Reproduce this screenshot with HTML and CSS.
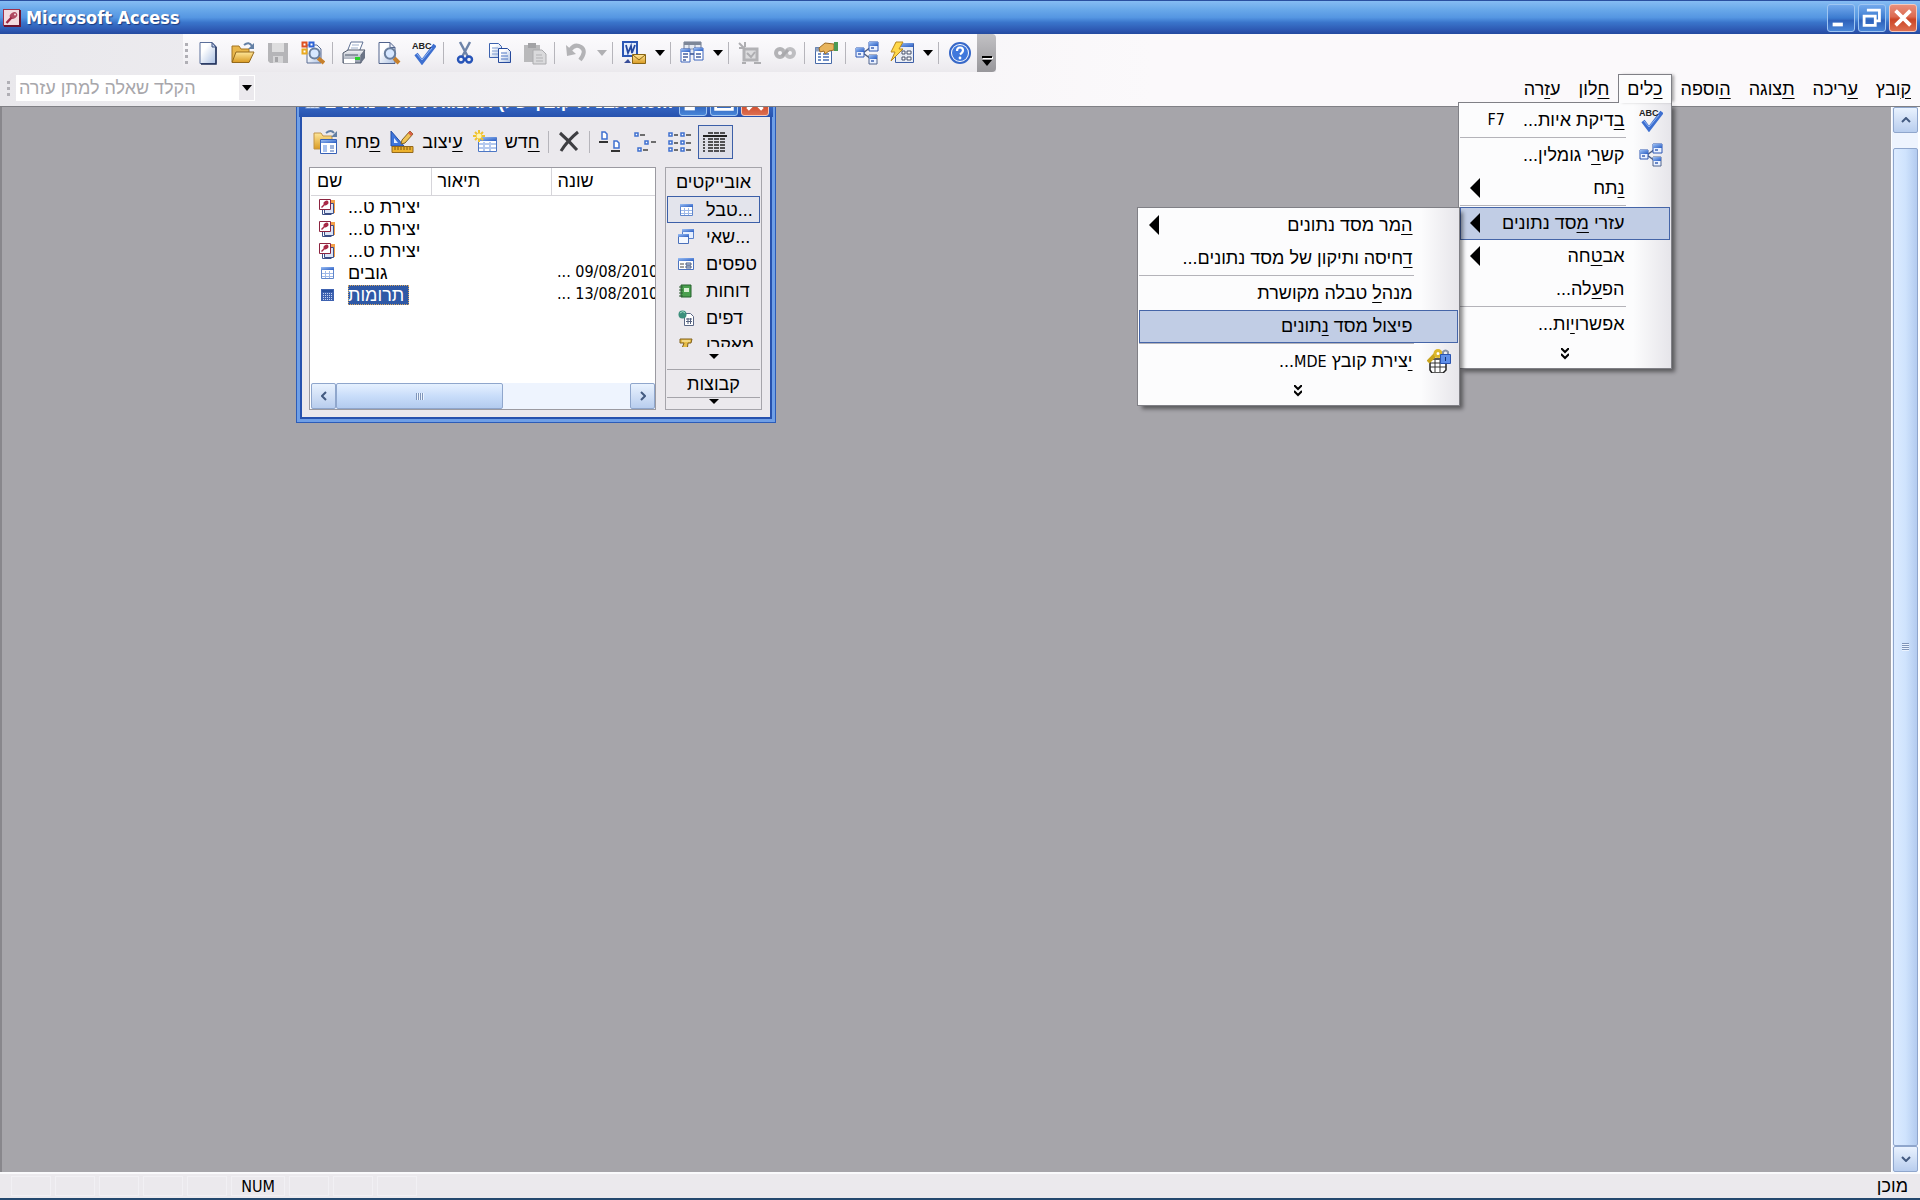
FILE: index.html
```
<!DOCTYPE html>
<html lang="he">
<head>
    <meta charset="UTF-8">
    <meta name="viewport" content="width=device-width, initial-scale=1.0">
    <title>Microsoft Access</title>
    <link rel="stylesheet" href="styles.css">
</head>
<body>
    <!-- Shared icons -->
    <svg class="sprite" width="0" height="0" aria-hidden="true">
        <defs>
            <linearGradient id="gBlue" x1="0" y1="0" x2="1" y2="1"><stop offset="0" stop-color="#9cc0f5"/><stop offset="1" stop-color="#2c5fc4"/></linearGradient>
            <linearGradient id="gPage" x1="0" y1="0" x2="1" y2="1"><stop offset="0.3" stop-color="#ffffff"/><stop offset="1" stop-color="#a9bfe2"/></linearGradient>
            <linearGradient id="gGold" x1="0" y1="0" x2="0" y2="1"><stop offset="0" stop-color="#ffe79a"/><stop offset="1" stop-color="#d99a22"/></linearGradient>
            <linearGradient id="gGray" x1="0" y1="0" x2="0" y2="1"><stop offset="0" stop-color="#f4f5f8"/><stop offset="1" stop-color="#8f98a8"/></linearGradient>
        </defs>
        <symbol id="access" viewBox="0 0 18 18">
            <rect x="0.5" y="0.5" width="16" height="16" fill="#f3dce0" stroke="#a0304a"/>
            <path d="M17 1v16H1" fill="none" stroke="#6d1430" stroke-width="2"/>
            <ellipse cx="10.500" cy="6.500" rx="4" ry="3" transform="rotate(-35 10.500 6.500)" fill="#b04a62"/>
            <path d="M8.500 8.500l-5 5.500" stroke="#9c2744" stroke-width="2.400"/><circle cx="12" cy="5.500" r="1" fill="#f3dce0"/>
        </symbol>
        <symbol id="page" viewBox="0 0 24 24">
            <path d="M4 1.500h12l4 4V22.500H4z" fill="url(#gPage)" stroke="#5b6f9a"/>
            <path d="M20 6v17H5" fill="none" stroke="#1f2f58" stroke-width="1.500"/>
            <path d="M16 1.500V6h4z" fill="#c4d3ee" stroke="#3c507f"/>
        </symbol>
        <symbol id="open" viewBox="0 0 24 24">
            <path d="M1 21V5h7l2 3h8v4" fill="#e9b74c" stroke="#a47420"/>
            <path d="M1 21.500L5 11h18l-5 10.500z" fill="url(#gGold)" stroke="#94691c"/>
            <path d="M13 4q5-4 8 1" fill="none" stroke="#6380a5" stroke-width="2"/>
            <path d="M23 2v6h-6z" fill="#6380a5"/>
        </symbol>
        <symbol id="save" viewBox="0 0 24 24">
            <path d="M2 2h20v20H4l-2-2z" fill="#b5b5b8"/>
            <path d="M6 2h12v9H6z" fill="#dededf"/>
            <path d="M7 15h10v7H7z" fill="#d4d4d6"/><path d="M9 16h3v5H9z" fill="#a5a5a8"/>
        </symbol>
        <symbol id="search" viewBox="0 0 24 24">
            <path d="M6 4h10l4 4v14H6z" fill="url(#gPage)" stroke="#5a6c93"/>
            <path d="M1.500 1.500h4v4h-4z" fill="#fff" stroke="#dd5020" stroke-width="2"/><path d="M8.500 1.500h4v4h-4z" fill="#fff" stroke="#2c63d6" stroke-width="2"/><path d="M1.500 8.500h4v4h-4z" fill="#fff" stroke="#e9aa20" stroke-width="2"/>
            <path d="M17 17l6 5" stroke="#c7802c" stroke-width="4"/>
            <circle cx="13.500" cy="12.500" r="5" fill="#d6e7ff" stroke="#6a7f9e" stroke-width="2"/>
        </symbol>
        <symbol id="print" viewBox="0 0 24 24">
            <path d="M9 1h12l-4 10H5z" fill="#fff" stroke="#5f7194"/><path d="M10 4h7M9 7h7" stroke="#9fb0cc"/>
            <path d="M1 12l5-3h17l-4 5v8H1z" fill="url(#gGray)" stroke="#4c5668"/>
            <path d="M19 14l4-5v8l-4 5z" fill="#6b7486"/>
            <path d="M3 14h13" stroke="#4d586b"/><path d="M2 18h11v4H2z" fill="#fff"/><path d="M13 16h5v3h-5z" fill="#2bd02b"/>
        </symbol>
        <symbol id="preview" viewBox="0 0 24 24">
            <path d="M2 1.500h11l5 5V22.500H2z" fill="url(#gPage)" stroke="#51638c"/><path d="M13 1.500v5h5" fill="none" stroke="#51638c"/>
            <path d="M17 17l5 5" stroke="#c7802c" stroke-width="4"/>
            <circle cx="13" cy="12.500" r="5.200" fill="#d6e7ff" stroke="#6a7f9e" stroke-width="2"/>
        </symbol>
        <symbol id="spell" viewBox="0 0 24 24">
            <path d="M4 13l6 8L23 4" fill="none" stroke="#3d6fd0" stroke-width="4"/>
            <path d="M5 13l5 6L20 7" fill="none" stroke="#8fb4f2"/>
            <text class="abc" x="0" y="8" fill="#222">ABC</text>
        </symbol>
        <symbol id="cut" viewBox="0 0 24 24">
            <path d="M7 1l8 15M17 1L9 16" stroke="#6d83a8" stroke-width="2.500"/>
            <circle cx="8" cy="18.500" r="3" fill="none" stroke="#2754b8" stroke-width="2.400"/><circle cx="16" cy="18.500" r="3" fill="none" stroke="#2754b8" stroke-width="2.400"/>
        </symbol>
        <symbol id="copy" viewBox="0 0 24 24">
            <path d="M1.500 2.500h9l3 3V16.500h-12z" fill="url(#gPage)" stroke="#3d62ae"/><path d="M4 7h6M4 10h7M4 13h6" stroke="#7d9ad0"/>
            <path d="M10.500 7.500h9l3 3V21.500h-12z" fill="url(#gPage)" stroke="#26499c"/><path d="M13 12h6M13 15h7M13 18h7" stroke="#4f76c4"/>
        </symbol>
        <symbol id="paste" viewBox="0 0 24 24">
            <path d="M1 4h16v17H1z" fill="#b9b9bb"/><path d="M5 2h8v5H5z" fill="#a2a2a5"/>
            <path d="M10 9h9l4 4v10H10z" fill="#dadadc" stroke="#ababae"/><path d="M13 14h6M13 17h7M13 20h7" stroke="#b2b2b5"/>
        </symbol>
        <symbol id="undo" viewBox="0 0 24 24">
            <path d="M6 9q5-7 11-3t-1 13" fill="none" stroke="#b3b3b6" stroke-width="4"/><path d="M2 4l1 11 9-2z" fill="#b3b3b6"/>
        </symbol>
        <symbol id="word" viewBox="0 0 24 24">
            <path d="M1 1h14v14H1z" fill="#e4edfc" stroke="#2a56b4" stroke-width="2"/>
            <path d="M4 4l2 8 3-7 1 7 3-8" fill="none" stroke="#2448a0" stroke-width="1.800"/>
            <path d="M10.500 13.500h13v9h-13z" fill="url(#gGold)" stroke="#8a6614"/><path d="M11 14l6 5 6-5" fill="none" stroke="#8a6614"/>
            <path d="M2 22h7l-3-4z" fill="#3a4f9a"/>
        </symbol>
        <symbol id="analyze" viewBox="0 0 24 24">
            <path d="M4 1h17v12H4z" fill="#e6eaf2" stroke="#6c7890"/><path d="M4 1h17v3H4z" fill="#7d8798"/><path d="M5 8h15M9 4v9M15 4v9" stroke="#8a94a8"/>
            <path d="M1 8h9v13H1z" fill="#fff" stroke="#3c64bc"/><path d="M1 8h9v3H1z" fill="url(#gBlue)"/><path d="M14 7h9v12h-9z" fill="#fff" stroke="#3c64bc"/><path d="M14 7h9v3h-9z" fill="url(#gBlue)"/>
            <path d="M3 13h5M3 16h5M3 19h3M16 13h5M16 16h5M10 13h4" fill="none" stroke="#45609e" stroke-width="1.500"/>
        </symbol>
        <symbol id="code" viewBox="0 0 24 24">
            <path d="M6 8h13v11H6z" fill="#dcdcde" stroke="#b2b2b5" stroke-width="3"/><path d="M9 12l4 4 4-5M1 2l6 6M7 1v5M1 7h5" fill="none" stroke="#aeaeb1" stroke-width="2"/><path d="M4 22h4M16 22h7" stroke="#aeaeb1" stroke-width="2"/>
        </symbol>
        <symbol id="script" viewBox="0 0 24 24">
            <circle cx="7" cy="12" r="4" fill="none" stroke="#b3b3b6" stroke-width="4"/><circle cx="17" cy="12" r="4" fill="none" stroke="#bebec1" stroke-width="4"/><path d="M9 15l6-6" stroke="#a9a9ac" stroke-width="3"/>
        </symbol>
        <symbol id="props" viewBox="0 0 24 24">
            <path d="M1.500 6.500h16v16h-16z" fill="#fff" stroke="#476aa8"/><path d="M1.500 6.500h16v4h-16z" fill="#8da0bf"/>
            <path d="M4 13h3M4 16h3M4 19h3M9 13h6M9 16h6M9 19h6" stroke="#4770b8" stroke-width="1.500"/>
            <path d="M5 7l6-5 9 1v6l-5 1-4 3-1-3-4 1z" fill="#e8b45c" stroke="#9a6a24"/><path d="M20 1h4v9h-4z" fill="#4b9a55"/>
        </symbol>
        <symbol id="relations" viewBox="0 0 24 24">
            <path d="M8 12l8-6M8 12l8 6" stroke="#4c5d80" stroke-width="1.500"/>
            <path d="M1 7h8v9H1z" fill="#eaf1ff" stroke="#2d57b2"/><path d="M1 7h8v4H1z" fill="url(#gBlue)"/>
            <path d="M14 1h9v9h-9z" fill="#eaf1ff" stroke="#2d57b2"/><path d="M14 1h9v4h-9z" fill="url(#gBlue)"/>
            <path d="M14 14h8v9h-8z" fill="#eaf1ff" stroke="#51648e"/><path d="M14 14h8v4h-8z" fill="url(#gBlue)"/>
            <path d="M3 13h3M16 7h3M16 20h3" stroke="#3e63b4" stroke-width="1.500"/>
        </symbol>
        <symbol id="newobj" viewBox="0 0 24 24">
            <path d="M5.500 2.500h18v19h-18z" fill="#e9edf5" stroke="#3e5fa6"/><path d="M6 2h17v4H6z" fill="url(#gBlue)"/>
            <path d="M12 10h3v3h-3zM17 10h4v3h-4zM12 16h3v3h-3zM17 16h4v3h-4z" fill="#fff" stroke="#46506a"/>
            <path d="M6 1h7l-4 7h4L1 20l4-9H1z" fill="#ffd84a" stroke="#b8861c"/>
        </symbol>
        <symbol id="help" viewBox="0 0 24 24">
            <circle cx="12" cy="12" r="10" fill="#fff" stroke="#3768c8" stroke-width="2"/><circle cx="12" cy="12" r="8" fill="#3f78dc"/>
            <path d="M9 10q0-3.500 3-3.500t3 3q0 1.500-3 4" fill="none" stroke="#fff" stroke-width="2.200"/><circle cx="12" cy="17" r="1.400" fill="#fff"/>
        </symbol>
        <symbol id="openobj" viewBox="0 0 24 24">
            <path d="M1 19V3h7l2 3h9v13z" fill="url(#gGold)" stroke="#c09348"/>
            <path d="M13 3q5-4 8 0" fill="none" stroke="#6380a5" stroke-width="2"/><path d="M24 1v6h-6z" fill="#6380a5"/>
            <path d="M7.500 9.500h16v14h-16z" fill="#fff" stroke="#3660b6"/><path d="M8 10h15v3H8z" fill="url(#gBlue)"/><path d="M10 15h4v7h-4z" fill="#a9c3ef"/><path d="M17 16h4M17 18h4M17 21h4" stroke="#3e68b8"/>
        </symbol>
        <symbol id="design" viewBox="0 0 24 24">
            <path d="M1 1l13 15H1z" fill="#3e75dc" stroke="#2450a8"/><path d="M4 8l4 5H4z" fill="#e6efff"/>
            <path d="M11 14l1-4 8-9 3 3-8 9z" fill="#f0c355" stroke="#80601f"/><path d="M20 1l3 3-2 2-3-3z" fill="#d8604a"/>
            <path d="M2 16.500h21v6H2z" fill="#edb22d" stroke="#94691c"/><path d="M5 17v3M8 17v3M11 17v3M14 17v3M17 17v3M20 17v3" stroke="#7a5515"/>
        </symbol>
        <symbol id="newtable" viewBox="0 0 24 24">
            <path d="M5.500 7.500h18v14h-18z" fill="#fff" stroke="#4d77c4"/><path d="M6 7h17v4H6z" fill="url(#gBlue)"/><path d="M11 12v9M17 12v9M6 14h17M6 18h17" stroke="#b4c9ee" stroke-width="2"/>
            <path d="M6 0v12M0 6h12M2 2l8 8M10 2l-8 8" stroke="#efc22e" stroke-width="2"/><circle cx="6" cy="6" r="2.500" fill="#fff5b0"/>
        </symbol>
        <symbol id="delete" viewBox="0 0 24 24"><path d="M3 3q8 7 17 17M21 2Q11 10 4 21" fill="none" stroke="#3e3e42" stroke-width="3"/></symbol>
        <symbol id="large" viewBox="0 0 24 24">
            <path d="M4 2h3l2 2v5H4zM16 11h3l2 2v5h-5z" fill="#fff" stroke="#3f70d0" stroke-width="1.500"/><path d="M1 12h9M13 21h9" stroke="#333" stroke-width="2"/>
        </symbol>
        <symbol id="small" viewBox="0 0 24 24">
            <path d="M2 3h3v3H2zM12 11h3v3h-3zM5 18h3v3H5z" fill="#fff" stroke="#3f70d0" stroke-width="1.500"/><path d="M7 5h5M18 12h5M10 20h5" stroke="#444" stroke-width="1.500"/>
        </symbol>
        <symbol id="list" viewBox="0 0 24 24">
            <path d="M1 3h3v3H1zM13 3h3v3h-3zM1 11h3v3H1zM13 11h3v3h-3zM1 18h3v3H1zM13 18h3v3h-3z" fill="#fff" stroke="#3f70d0" stroke-width="1.500"/><path d="M6 5h4M18 5h5M6 13h4M18 13h5M6 20h4M18 20h5" stroke="#444" stroke-width="1.500"/>
        </symbol>
        <symbol id="details" viewBox="0 0 24 24">
            <path d="M5 3h17M5 9h17M5 12h17M5 15h17M5 18h17M5 21h17" stroke="#222" stroke-width="1.500" stroke-dasharray="5 1"/><path d="M0 6h24" stroke="#222" stroke-width="2"/><path d="M1 8v15" stroke="#222" stroke-width="1.500" stroke-dasharray="2 1"/>
        </symbol>
        <symbol id="wizard" viewBox="0 0 16 16">
            <path d="M6 1h10v13H6z" fill="#f3a04a"/><path d="M5.500 4.500h9v10h-9z" fill="#dbe5f8" stroke="#3c4f86"/><path d="M3.500 10v5.500h9" fill="none" stroke="#3c4f86"/><path d="M0.500 0.500h11v10h-11z" fill="#fff" stroke="#8c2440"/>
            <ellipse cx="7" cy="4" rx="2.800" ry="2" transform="rotate(-35 7 4)" fill="#a82846"/><path d="M6 5L2.500 8.500" stroke="#a82846" stroke-width="1.500"/>
        </symbol>
        <symbol id="table" viewBox="0 0 16 16">
            <path d="M2.500 2.500h12v11h-12z" fill="#fff" stroke="#5f86cc"/><path d="M2 2h13v3H2z" fill="url(#gBlue)"/><path d="M6.500 6v7M10.500 6v7M3 8.500h11M3 11.500h11" stroke="#9db8e8"/>
        </symbol>
        <symbol id="tablesel" viewBox="0 0 16 16">
            <path d="M2 2h13v12H2z" fill="#3e62b0"/><path d="M4.500 6v7M6.500 6v7M8.500 6v7M10.500 6v7M12.500 6v7" stroke="#c2d2f2" stroke-dasharray="1 1"/><path d="M3 3h11v2H3z" fill="#274f9e"/>
        </symbol>
        <symbol id="query" viewBox="0 0 16 16">
            <path d="M4.500 0.500h11v9h-11z" fill="#e6efff" stroke="#5b82cc"/><path d="M4 0h12v3H4z" fill="url(#gBlue)"/><path d="M0.500 5.500h10v9H0.500z" fill="#f4f8ff" stroke="#4a70ba"/><path d="M0 5h11v3H0z" fill="url(#gBlue)"/>
        </symbol>
        <symbol id="form" viewBox="0 0 16 16">
            <path d="M0.500 2.500h15v11H0.500z" fill="#fff" stroke="#4c73be"/><path d="M0 2h16v3H0z" fill="url(#gBlue)"/><path d="M2 8h4M2 11h4" stroke="#444"/><path d="M8 7h5v2H8zM8 10h5v2H8z" fill="#cbdcf8" stroke="#4c5c80"/>
        </symbol>
        <symbol id="report" viewBox="0 0 16 16">
            <path d="M3 2h10v12H3z" fill="#4aa04e" stroke="#24602c"/><path d="M6 5h5v4H6z" fill="#d9f0d4"/><path d="M1 4h4M1 7h4M1 10h4M1 13h4" stroke="#2f5d34"/>
        </symbol>
        <symbol id="webpage" viewBox="0 0 16 16">
            <path d="M6.500 3.500h6l3 3v9h-9z" fill="#fff" stroke="#5a6785"/><path d="M8 9h6M8 11.500h6M10 8v6M12.500 8v6" stroke="#54617e"/><circle cx="4.500" cy="4.500" r="4" fill="#3c8f7c"/><path d="M2 3q3-3 5 0" fill="none" stroke="#a3dcc4"/>
        </symbol>
        <symbol id="macro" viewBox="0 0 16 16">
            <path d="M2 2h12l-1 4h-3l-1 8H3l3-8H2z" fill="#e6bd48" stroke="#80601c"/><path d="M4 4h8" stroke="#fff3bd"/>
        </symbol>
        <symbol id="mde" viewBox="0 0 24 24">
            <path d="M3 10h16v11l-3 3H5l-2-3z" fill="#fff" stroke="#222" stroke-width="1.500"/><path d="M3 14h16M3 18h16M8 11v12M13 11v12" stroke="#333"/>
            <path d="M1 13l8-8" stroke="#c9a41c" stroke-width="4"/><circle cx="11" cy="4.500" r="3" fill="#fff" stroke="#dcb72c" stroke-width="3"/>
            <path d="M16 5V3q2.500-3 5 0v2" fill="none" stroke="#8792a6" stroke-width="2"/><path d="M13.500 5.500h10v9h-10z" fill="#5f8fe8" stroke="#2a54b0"/><path d="M18 8h1v4h-1z" fill="#16326e"/>
        </symbol>
        <symbol id="chevrons" viewBox="0 0 8 12"><path d="M0 0l4 4 4-4M0 6l4 4 4-4" fill="none" stroke="#000" stroke-width="2"/></symbol>
        <symbol id="angle" viewBox="0 0 10 6"><path d="M1 5l4-4 4 4" fill="none" stroke="#435a80" stroke-width="2"/></symbol>
    </svg>

    <div class="app">
        <header class="title-bar">
            <svg class="app-icon"><use href="#access"/></svg>
            <h1>Microsoft Access</h1>
            <button class="win-button" aria-label="Minimize"><svg viewBox="0 0 28 28"><path d="M5 19h11v4H5z" fill="#fff"/></svg></button>
            <button class="win-button" aria-label="Restore"><svg viewBox="0 0 28 28"><path d="M10 7V5.500h12V17h-3M5.500 12h12v10h-12z" fill="none" stroke="#fff" stroke-width="3"/></svg></button>
            <button class="win-button close" aria-label="Close"><svg viewBox="0 0 28 28"><path d="M6 6l16 16M22 6L6 22" stroke="#fff" stroke-width="4"/></svg></button>
        </header>

        <div class="bars">
            <div class="toolbar">
                <span class="grip"></span>
                <button class="tool" aria-label="New"><svg><use href="#page"/></svg></button>
                <button class="tool" aria-label="Open"><svg><use href="#open"/></svg></button>
                <button class="tool" aria-label="Save" disabled><svg><use href="#save"/></svg></button>
                <button class="tool" aria-label="File search"><svg><use href="#search"/></svg></button>
                <span class="sep"></span>
                <button class="tool" aria-label="Print"><svg><use href="#print"/></svg></button>
                <button class="tool" aria-label="Print preview"><svg><use href="#preview"/></svg></button>
                <button class="tool" aria-label="Spelling"><svg><use href="#spell"/></svg></button>
                <span class="sep"></span>
                <button class="tool" aria-label="Cut"><svg><use href="#cut"/></svg></button>
                <button class="tool" aria-label="Copy"><svg><use href="#copy"/></svg></button>
                <button class="tool" aria-label="Paste" disabled><svg><use href="#paste"/></svg></button>
                <span class="sep"></span>
                <button class="tool" aria-label="Undo" disabled><svg><use href="#undo"/></svg></button>
                <button class="drop" aria-label="Undo list" disabled></button>
                <span class="sep"></span>
                <button class="tool" aria-label="Office links"><svg><use href="#word"/></svg></button>
                <button class="drop" aria-label="Office links list"></button>
                <span class="sep"></span>
                <button class="tool" aria-label="Analyze"><svg><use href="#analyze"/></svg></button>
                <button class="drop" aria-label="Analyze list"></button>
                <span class="sep"></span>
                <button class="tool" aria-label="Code" disabled><svg><use href="#code"/></svg></button>
                <button class="tool" aria-label="Script editor" disabled><svg><use href="#script"/></svg></button>
                <span class="sep"></span>
                <button class="tool" aria-label="Properties"><svg><use href="#props"/></svg></button>
                <span class="sep"></span>
                <button class="tool" aria-label="Relationships"><svg><use href="#relations"/></svg></button>
                <button class="tool" aria-label="New object"><svg><use href="#newobj"/></svg></button>
                <button class="drop" aria-label="New object list"></button>
                <span class="sep"></span>
                <button class="tool" aria-label="Help"><svg><use href="#help"/></svg></button>
                <button class="more" aria-label="Toolbar options"></button>
            </div>

            <div class="menu-row">
                <span class="grip"></span>
                <div class="ask">
                    <input type="text" aria-label="הקלד שאלה למתן עזרה" placeholder="הקלד שאלה למתן עזרה">
                    <button class="drop" aria-label="Questions"></button>
                </div>
                <nav class="menu-bar" dir="rtl">
                    <button class="menu-title"><u>ק</u>ובץ</button>
                    <button class="menu-title"><u>ע</u>ריכה</button>
                    <button class="menu-title"><u>ת</u>צוגה</button>
                    <button class="menu-title"><u>ה</u>וספה</button>
                    <div class="menu-holder">
                        <button class="menu-title active"><u>כ</u>לים</button>
                        <div class="menu tools-menu">
                            <button class="item"><svg><use href="#spell"/></svg><span><u>ב</u>דיקת איות...</span><kbd>F7</kbd></button>
                            <hr>
                            <button class="item"><svg><use href="#relations"/></svg><span>קש<u>ר</u>י גומלין...</span></button>
                            <button class="item parent"><span><u>נ</u>תח</span></button>
                            <hr>
                            <div class="item-holder">
                                <button class="item parent selected"><span>עזרי <u>מ</u>סד נתונים</span></button>
                                <div class="menu sub-menu">
                                    <button class="item parent"><span><u>ה</u>מר מסד נתונים</span></button>
                                    <button class="item"><span><u>ד</u>חיסה ותיקון של מסד נתונים...</span></button>
                                    <hr>
                                    <button class="item"><span>מנה<u>ל</u> טבלה מקושרת</span></button>
                                    <button class="item selected"><span>פיצול מסד <u>נ</u>תונים</span></button>
                                    <hr>
                                    <button class="item"><svg><use href="#mde"/></svg><span><u>י</u>צירת קובץ <bdi class="latin">MDE</bdi>...</span></button>
                                    <button class="expand" aria-label="Expand"><svg><use href="#chevrons"/></svg></button>
                                </div>
                            </div>
                            <button class="item parent"><span>אב<u>ט</u>חה</span></button>
                            <button class="item"><span>הפ<u>ע</u>לה...</span></button>
                            <hr>
                            <button class="item"><span>אפשרו<u>י</u>ות...</span></button>
                            <button class="expand" aria-label="Expand"><svg><use href="#chevrons"/></svg></button>
                        </div>
                    </div>
                    <button class="menu-title"><u>ח</u>לון</button>
                    <button class="menu-title">ע<u>ז</u>רה</button>
                </nav>
            </div>
        </div>

        <main class="workspace">
            <div class="desktop">
                <section class="db-window">
                    <div class="db-title">
                        <svg class="db-icon"><use href="#table"/></svg>
                        <h2>תרומות : מסד נתונים (תבנית קובץ של Access 2000)</h2>
                        <button class="win-button" aria-label="Minimize window"><svg viewBox="0 0 28 28"><path d="M5 19h11v4H5z" fill="#fff"/></svg></button>
                        <button class="win-button" aria-label="Maximize window"><svg viewBox="0 0 28 28"><path d="M5 6h18v16H5z" fill="none" stroke="#fff" stroke-width="3"/></svg></button>
                        <button class="win-button close" aria-label="Close window"><svg viewBox="0 0 28 28"><path d="M6 6l16 16M22 6L6 22" stroke="#fff" stroke-width="4"/></svg></button>
                    </div>
                    <div class="db-toolbar">
                        <button class="db-tool"><svg><use href="#openobj"/></svg><span><u>פ</u>תח</span></button>
                        <button class="db-tool"><svg><use href="#design"/></svg><span><u>ע</u>יצוב</span></button>
                        <button class="db-tool"><svg><use href="#newtable"/></svg><span><u>ח</u>דש</span></button>
                        <span class="sep"></span>
                        <button class="tool" aria-label="Delete"><svg><use href="#delete"/></svg></button>
                        <span class="sep"></span>
                        <button class="tool" aria-label="Large icons"><svg><use href="#large"/></svg></button>
                        <button class="tool" aria-label="Small icons"><svg><use href="#small"/></svg></button>
                        <button class="tool" aria-label="List"><svg><use href="#list"/></svg></button>
                        <button class="tool pressed" aria-label="Details"><svg><use href="#details"/></svg></button>
                    </div>
                    <div class="db-body">
                        <div class="list-pane">
                            <table class="object-table">
                                <thead>
                                    <tr><th>שם</th><th>תיאור</th><th>שונה</th></tr>
                                </thead>
                                <tbody>
                                    <tr><td><svg><use href="#wizard"/></svg><span dir="rtl">יצירת ט...</span></td><td></td><td></td></tr>
                                    <tr><td><svg><use href="#wizard"/></svg><span dir="rtl">יצירת ט...</span></td><td></td><td></td></tr>
                                    <tr><td><svg><use href="#wizard"/></svg><span dir="rtl">יצירת ט...</span></td><td></td><td></td></tr>
                                    <tr><td><svg><use href="#table"/></svg><span>גובים</span></td><td></td><td class="latin">... 09/08/2010</td></tr>
                                    <tr><td><svg><use href="#tablesel"/></svg><span class="current">תרומות</span></td><td></td><td class="latin">... 13/08/2010</td></tr>
                                </tbody>
                            </table>
                            <div class="scroll-x">
                                <button class="scroll-button" aria-label="Scroll left"><svg class="left"><use href="#angle"/></svg></button>
                                <div class="thumb"><span class="lines"></span></div>
                                <button class="scroll-button" aria-label="Scroll right"><svg class="right"><use href="#angle"/></svg></button>
                            </div>
                        </div>
                        <div class="side-pane">
                            <div class="side-head">אובייקטים</div>
                            <div class="side-list">
                                <button class="side-item on"><svg><use href="#table"/></svg>טבל...</button>
                                <button class="side-item"><svg><use href="#query"/></svg>שאי...</button>
                                <button class="side-item"><svg><use href="#form"/></svg>טפסים</button>
                                <button class="side-item"><svg><use href="#report"/></svg>דוחות</button>
                                <button class="side-item"><svg><use href="#webpage"/></svg>דפים</button>
                                <button class="side-item"><svg><use href="#macro"/></svg>מאקרו</button>
                            </div>
                            <button class="side-more" aria-label="More objects"></button>
                            <div class="side-head groups">קבוצות</div>
                            <button class="side-more last" aria-label="More groups"></button>
                        </div>
                    </div>
                </section>
            </div>
            <div class="scroll-y">
                <button class="scroll-button" aria-label="Scroll up"><svg><use href="#angle"/></svg></button>
                <div class="thumb"><span class="lines"></span></div>
                <button class="scroll-button" aria-label="Scroll down"><svg class="down"><use href="#angle"/></svg></button>
            </div>
        </main>

        <footer class="status-bar">
            <div class="cells">
                <span></span><span></span><span></span><span></span><span></span>
                <span class="wide latin">NUM</span>
                <span></span><span></span><span></span>
            </div>
            <span class="ready">מוכן</span>
        </footer>
    </div>
</body>
</html>
```
FILE: styles.css
```
* {
    box-sizing: border-box;
}

body {
    margin: 0;
    font-family: "Liberation Sans", Arial, sans-serif;
    font-size: 18px;
    line-height: 22px;
    color: #000;
    background-color: #ebe9ed;
}

button {
    font: inherit;
    color: inherit;
    padding: 0;
    border: none;
    background: none;
}

u {
    text-underline-offset: 3px;
    text-decoration-thickness: 1px;
}

.latin, kbd {
    font-family: "DejaVu Sans Condensed", "DejaVu Sans", sans-serif;
    font-size: 16px;
}

.abc {
    font: bold 9px "Liberation Sans", sans-serif;
    direction: ltr;
}

.sprite {
    position: absolute;
}

.app {
    display: flex;
    flex-direction: column;
    height: 100vh;
    overflow: hidden;
    border-bottom: 2px solid #24486e;
}

/* Title bar */
.title-bar {
    display: flex;
    align-items: center;
    gap: 3px;
    height: 34px;
    flex: none;
    padding: 0 3px;
    color: #fff;
    border-top: 1px solid #2a4fa0;
    background: linear-gradient(#86bcf3, #6aa9ea 25%, #5596e2 50%, #3a75cb 65%, #2c56b0 90%, #244a9f);
}

.title-bar h1 {
    flex: 1;
    margin: 0 0 0 2px;
    font: bold 18px/26px "DejaVu Sans Condensed", sans-serif;
    text-shadow: 1px 1px 1px #1b3a80;
}

.app-icon {
    width: 18px;
    height: 18px;
}

.win-button {
    width: 28px;
    height: 28px;
    border: 1px solid #9fc6f2;
    border-radius: 3px;
    background: linear-gradient(#72a9ec, #3c7bd0 50%, #2f62bb 60%, #4885d8);
}

.win-button svg {
    display: block;
    width: 26px;
    height: 26px;
}

.win-button.close {
    border-color: #f5c9bc;
    background: linear-gradient(#e88f7c, #dc6a50 45%, #cc4526 55%, #dd6e50);
}

/* Toolbars */
.bars {
    flex: none;
    border-bottom: 1px solid #808085;
    background: linear-gradient(90deg, #e9e8ec, #fbf9fb 60%);
}

.toolbar {
    display: flex;
    align-items: center;
    width: max-content;
    height: 38px;
    margin-left: 183px;
    background: linear-gradient(#fcfbfd, #f6f5f8 50%, #ebe9ed);
}

.grip {
    width: 3px;
    height: 21px;
    margin: 0 2px;
    background: repeating-linear-gradient(#b0afb5 0 3px, transparent 3px 6px);
}

.tool {
    display: flex;
    align-items: center;
    justify-content: center;
    width: 35px;
    height: 34px;
}

.tool svg, .item svg, .db-tool svg {
    width: 24px;
    height: 24px;
}

.sep {
    width: 1px;
    height: 22px;
    margin: 0 3px 0 2px;
    background-color: #b6b5bb;
}

.drop {
    display: flex;
    align-items: center;
    justify-content: center;
    width: 17px;
    height: 34px;
}

.drop::before, .side-more::before {
    content: "";
    border: 5px solid transparent;
    border-top: 6px solid #000;
    border-bottom: none;
}

.drop:disabled::before {
    border-top-color: #b0b0b3;
}

.more {
    display: flex;
    flex-direction: column;
    align-items: center;
    justify-content: flex-end;
    gap: 2px;
    width: 19px;
    height: 38px;
    padding-bottom: 6px;
    border-radius: 0 4px 4px 0;
    background: linear-gradient(#c2c1c4, #98979b);
}

.more::before {
    content: "";
    width: 10px;
    height: 2px;
    background-color: #000;
    box-shadow: 1px 1px #fff;
}

.more::after {
    content: "";
    border: 5px solid transparent;
    border-top: 6px solid #000;
    border-bottom: none;
}

.menu-row {
    display: flex;
    align-items: center;
    height: 34px;
    padding: 0 0 2px 5px;
}

.menu-row > .grip {
    height: 15px;
}

.ask {
    display: flex;
    width: 239px;
    height: 26px;
    margin-left: 4px;
    padding: 1px;
    background-color: #fff;
}

.ask input {
    flex: 1;
    min-width: 0;
    padding: 0 2px;
    border: none;
    font: inherit;
    background: none;
}

.ask input::placeholder {
    color: #a8a7ab;
    opacity: 1;
}

.ask .drop {
    width: 15px;
    height: 24px;
    background-color: #ebe9ed;
}

.menu-bar {
    display: flex;
    margin-left: auto;
}

.menu-title {
    height: 29px;
    padding: 0 8px;
    border: 1px solid transparent;
    border-bottom: none;
    white-space: nowrap;
}

.menu-holder, .item-holder {
    position: relative;
}

.menu-title.active {
    position: relative;
    z-index: 3;
    border-color: #808086;
    background-color: #fcfcfd;
    box-shadow: 3px 0 3px -1px rgba(0, 0, 0, 0.35);
}

.menu {
    position: absolute;
    z-index: 2;
    padding: 1px 1px 0;
    border: 1px solid #808086;
    background: linear-gradient(270deg, #e6e5ea, #fcfcfd 38px);
    box-shadow: 4px 4px 4px -1px rgba(0, 0, 0, 0.45);
}

.tools-menu {
    top: 28px;
    right: 0;
    width: 214px;
}

.sub-menu {
    top: 0;
    right: 100%;
    width: 323px;
}

.item {
    display: flex;
    align-items: center;
    width: 100%;
    height: 33px;
    padding: 0 44px 0 9px;
    border: 1px solid transparent;
    white-space: nowrap;
}

.item svg {
    flex: none;
    margin: 0 -38px 0 14px;
}

.item kbd {
    margin: 0 auto 0 18px;
}

.item.parent::after {
    content: "";
    margin-right: auto;
    border: 10px solid transparent;
    border-right-color: #000;
    border-left: none;
}

.item.selected {
    border-color: #4565a8;
    background-color: #c1cde5;
}

.menu hr {
    height: 1px;
    margin: 0 44px 1px 0;
    border: none;
    background-color: #b4b3b9;
}

.expand {
    display: block;
    width: 100%;
    height: 27px;
}

.expand svg {
    width: 8px;
    height: 12px;
}

/* Workspace */
.workspace {
    display: flex;
    flex: 1;
    min-height: 0;
    border-left: 2px solid #88878c;
    background-color: #a6a5aa;
}

.desktop {
    position: relative;
    flex: 1;
    overflow: hidden;
}

.scroll-y {
    display: flex;
    flex-direction: column;
    width: 29px;
    padding-left: 1px;
    border-left: 1px solid #fff;
    border-right: 2px solid #fff;
    background-color: #eef4fe;
}

.scroll-button {
    display: flex;
    flex: none;
    align-items: center;
    justify-content: center;
    width: 25px;
    height: 26px;
    border: 1px solid #8fa6cc;
    border-radius: 2px;
    background: linear-gradient(#e9f2fe, #b8cdee);
}

.scroll-button svg {
    width: 10px;
    height: 6px;
}

.scroll-button .down {
    transform: rotate(180deg);
}

.scroll-button .left {
    transform: rotate(270deg);
}

.scroll-button .right {
    transform: rotate(90deg);
}

.thumb {
    display: flex;
    align-items: center;
    justify-content: center;
    border: 1px solid #8fa6cc;
    border-radius: 2px;
}

.scroll-y .thumb {
    flex: 1;
    margin-top: 15px;
    background: linear-gradient(90deg, #dcebff, #cfe3fd 50%, #b3cbef);
}

.scroll-y .lines {
    width: 7px;
    height: 8px;
    background: repeating-linear-gradient(#7f95ba 0 1px, #eaf3ff 1px 2px);
}

/* Database window */
.db-window {
    position: absolute;
    top: -21px;
    left: 294px;
    width: 480px;
    padding: 0 5px 5px;
    border: 1px solid #2c5cb8;
    background-color: #ebe9ed;
    box-shadow: inset 0 0 0 3px #6f9fe6, inset 0 0 0 5px #2752ae;
}

.db-title {
    display: flex;
    align-items: center;
    gap: 3px;
    height: 30px;
    margin: 0 -3px;
    padding: 0 4px;
    color: #fff;
    background: linear-gradient(#5c97e2, #3567c4 60%, #2752ae);
}

.db-title h2 {
    flex: 1;
    margin: 0;
    overflow: hidden;
    font-size: 18px;
    line-height: 24px;
    white-space: nowrap;
    text-overflow: ellipsis;
}

.db-icon {
    flex: none;
    width: 18px;
    height: 18px;
}

.db-title .win-button {
    flex: none;
}

.db-toolbar {
    display: flex;
    align-items: center;
    height: 50px;
    padding-left: 7px;
}

.db-tool {
    display: flex;
    align-items: center;
    gap: 8px;
    padding: 0 6px 0 4px;
}

.db-toolbar .pressed {
    border: 1px solid #3c5fa8;
    background-color: #dedfe8;
}

.db-body {
    display: flex;
    gap: 9px;
    height: 243px;
    margin: 0 8px 7px 7px;
}

.list-pane {
    display: flex;
    flex: 1;
    flex-direction: column;
    justify-content: space-between;
    min-width: 0;
    padding-left: 1px;
    border: 1px solid #9b9aa1;
    background-color: #fff;
}

.object-table {
    width: 100%;
    table-layout: fixed;
    border-collapse: collapse;
}

.object-table th {
    width: 120px;
    height: 27px;
    padding: 0 6px;
    font-weight: normal;
    text-align: left;
    border-bottom: 1px solid #d6d5da;
    border-right: 1px solid #d6d5da;
}

.object-table th:last-child {
    width: auto;
    border-right: none;
}

.object-table td {
    height: 22px;
    padding: 0 0 0 6px;
    overflow: hidden;
    line-height: 20px;
    white-space: nowrap;
}

.object-table svg {
    width: 16px;
    height: 16px;
    margin: 0 13px 0 2px;
    vertical-align: middle;
}

.object-table span {
    display: inline-block;
    vertical-align: middle;
}

.object-table .current {
    padding-right: 5px;
    color: #fff;
    background-color: #2f59a6;
    outline: 1px dotted #d8a860;
    outline-offset: -1px;
}

.scroll-x {
    display: flex;
    height: 26px;
    background-color: #eef4fe;
}

.scroll-x .thumb {
    width: 167px;
    margin-right: auto;
    background: linear-gradient(#e6f1ff, #c9ddfa 50%, #b3cbef);
}

.scroll-x .lines {
    width: 8px;
    height: 7px;
    background: repeating-linear-gradient(90deg, #7f95ba 0 1px, #eaf3ff 1px 2px);
}

.side-pane {
    display: flex;
    flex-direction: column;
    width: 97px;
    padding: 0 1px;
    border: 1px solid #a5a4aa;
}

.side-head {
    height: 28px;
    line-height: 28px;
    text-align: center;
}

.side-list {
    height: 151px;
    overflow: hidden;
}

.side-item {
    display: flex;
    align-items: center;
    gap: 12px;
    width: 100%;
    height: 27px;
    padding-left: 10px;
    border: 1px solid transparent;
    white-space: nowrap;
}

.side-item svg {
    flex: none;
    width: 16px;
    height: 16px;
}

.side-item.on {
    border-color: #3c5fa8;
    background-color: #e3e4ec;
}

.side-more {
    display: flex;
    justify-content: center;
    height: 22px;
    padding-top: 7px;
}

.side-more::before {
    border-width: 5px 5px 0;
}

.side-head.groups {
    height: 29px;
    border-top: 1px solid #a5a4aa;
    border-bottom: 1px solid #a5a4aa;
}

.side-more.last {
    height: 11px;
    padding-top: 1px;
}

/* Status bar */
.status-bar {
    display: flex;
    flex: none;
    align-items: center;
    justify-content: space-between;
    height: 26px;
    padding: 0 12px 0 11px;
    border-top: 2px solid #fafafc;
    background-color: #ebe9ed;
}

.cells {
    display: flex;
    gap: 4px;
}

.cells span {
    width: 40px;
    height: 20px;
    line-height: 20px;
    border: 1px solid #f1f0f4;
    text-align: center;
}

.cells .wide {
    width: 54px;
}
```
